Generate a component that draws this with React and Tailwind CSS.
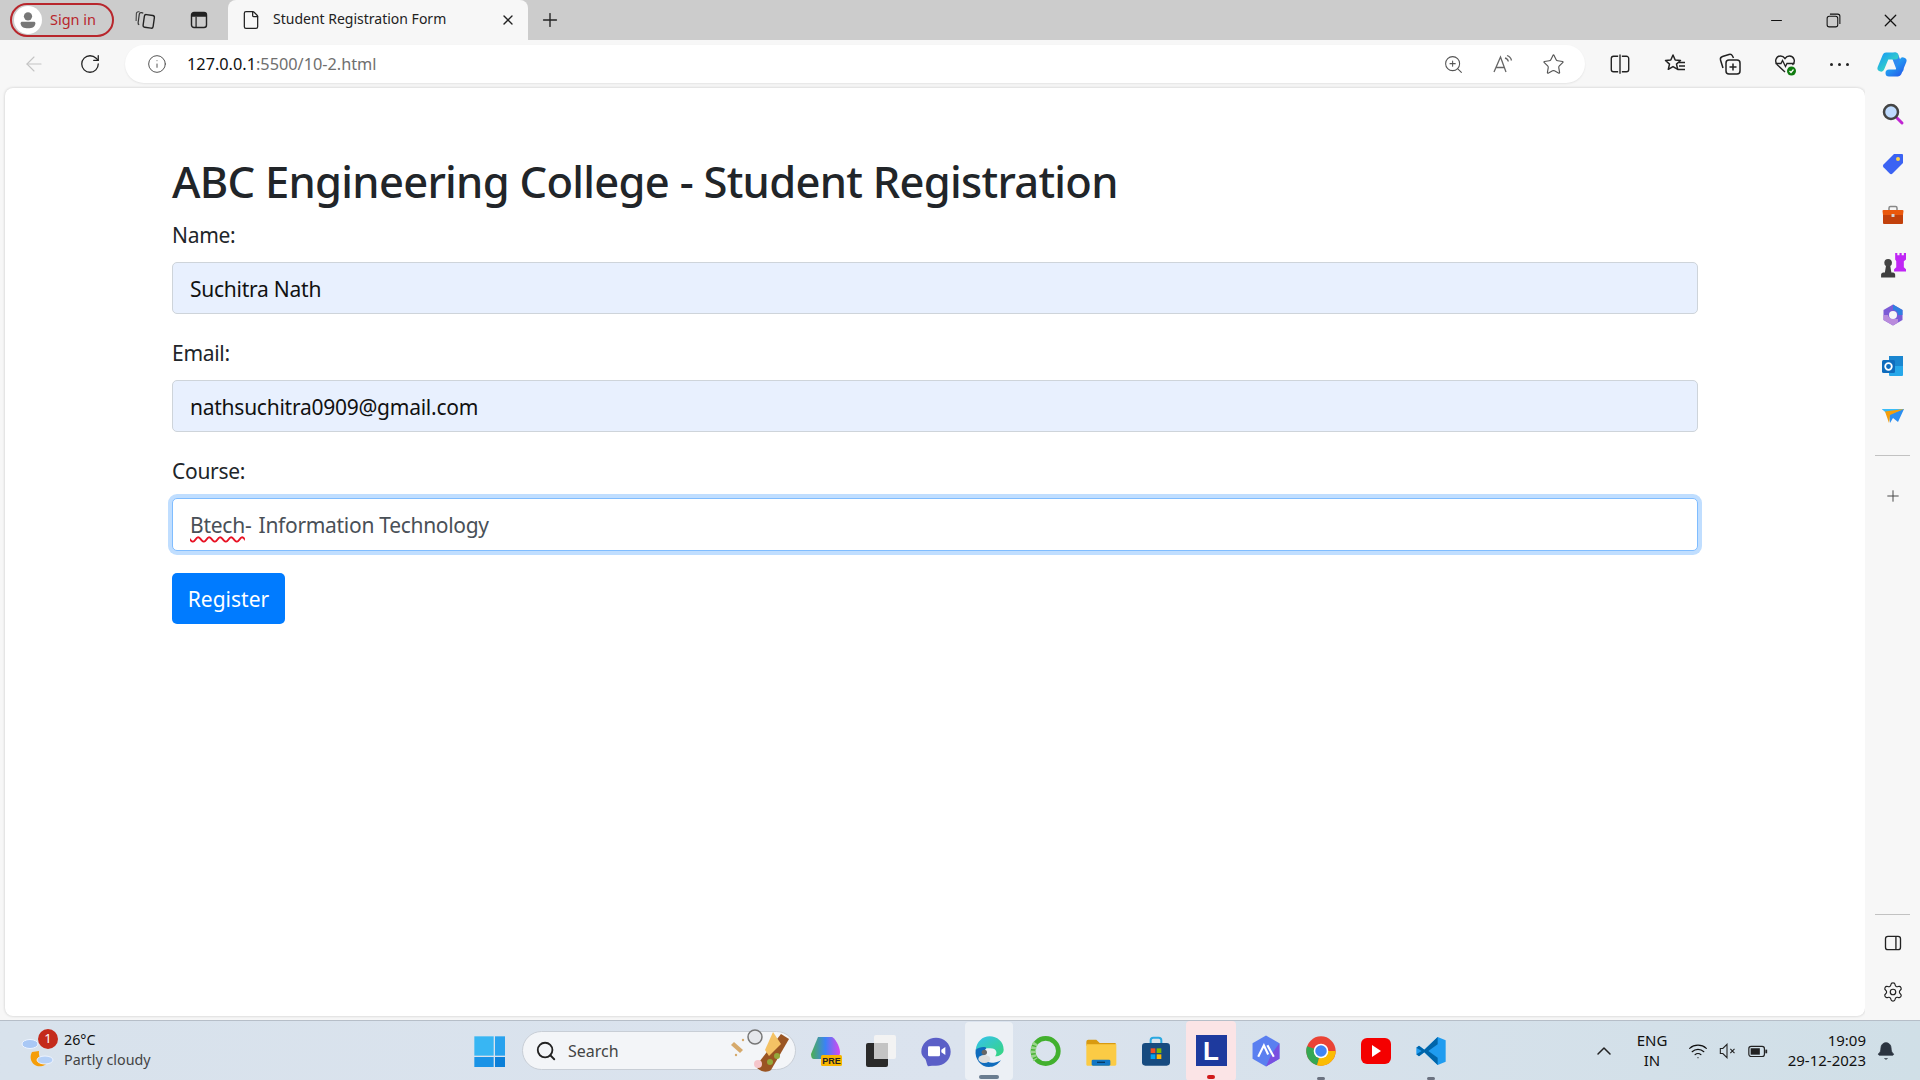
import React from "react";
import { File, X, Plus, ArrowLeft, RotateCw, Info, ZoomIn, Star, Minus, Search, ChevronUp, Wifi, Settings, Bell } from "lucide-react";

const sans = "font-['Noto_Sans','Open_Sans',sans-serif]";

const Svg = ({ s = 20, vb = 24, children, className = "" }) => (
  <svg width={s} height={s} viewBox={`0 0 ${vb} ${vb}`} fill="none" className={className}>{children}</svg>
);

const Slot = ({ w = 55, children, className = "" }) => (
  <div style={{ width: w }} className={`flex items-center justify-center shrink-0 h-full relative ${className}`}>{children}</div>
);

const Dot = ({ c }) => <div className="absolute bottom-0 left-1/2 -translate-x-1/2 h-[3px] w-[8px] rounded-full" style={{ background: c }} />;

function TabStrip() {
  return (
    <div className="h-10 bg-[#cccccc] flex items-end shrink-0 relative">
      <div className="w-[228px] h-10 flex items-center shrink-0">
        <div className="ml-[10px] w-[104px] h-[34px] rounded-full border-2 border-[#b8262c] flex items-center">
          <div className="ml-[2px] w-[28px] h-[28px] rounded-full bg-white flex items-center justify-center">
            <Svg s={22}><circle cx="12" cy="8" r="4.5" fill="#777" /><path d="M4 15.5c0-1 .8-1.5 2-1.5h12c1.2 0 2 .5 2 1.5C20 19.5 16.5 21 12 21s-8-1.5-8-5.5z" fill="#777" /></Svg>
          </div>
          <span className={`ml-[8px] text-[14.5px] leading-[20px] pb-[2px] text-[#b8262c] ${sans}`}>Sign in</span>
        </div>
        <Slot w={22} className="ml-[21px]">
          <Svg s={22}>
            <rect x="9.5" y="6.5" width="11" height="14" rx="2" transform="rotate(8 15 13.5)" stroke="#222" strokeWidth="1.5" />
            <path d="M9 4.5 7 4a2 2 0 0 0-2.3 1.600L3.400 15a2 2 0 0 0 1.200 2.200" stroke="#333" strokeWidth="1.3" />
            <path d="M5 3 3.500 3A2 2 0 0 0 1.500 5l-.3 8" stroke="#444" strokeWidth="1.2" />
          </Svg>
        </Slot>
        <Slot w={22} className="ml-[31px]">
          <Svg s={20}><rect x="3" y="3" width="18" height="18" rx="3" stroke="#222" strokeWidth="1.7" /><path d="M3 8V6a3 3 0 0 1 3-3h12a3 3 0 0 1 3 3v2z" fill="#222" /><path d="M8.5 8v13" stroke="#222" strokeWidth="1.5" /></Svg>
        </Slot>
      </div>
      <div className="w-[300px] h-10 bg-[#f7f7f7] rounded-t-[8px] flex items-center shrink-0 ml-0">
        <File size={20} strokeWidth={1.5} className="ml-[13px] text-[#222]" />
        <span className={`ml-[12px] text-[14px] leading-[20px] pb-[2px] text-[#222] flex-1 ${sans}`}>Student Registration Form</span>
        <X size={16} strokeWidth={2} className="mr-[12px] text-[#222]" />
      </div>
      <div className="w-11 h-10 flex items-center justify-center">
        <Plus size={22} strokeWidth={1.5} className="text-[#222]" />
      </div>
      <div className="flex-1" />
      <div className="h-10 flex items-center mr-[1px]">
        <Slot w={57}><Minus size={17} strokeWidth={1.5} className="text-[#111]" /></Slot>
        <Slot w={57}>
          <Svg s={17}><rect x="3" y="6" width="15" height="15" rx="3" stroke="#111" strokeWidth="1.5" /><path d="M7 3h11a3 3 0 0 1 3 3v11" stroke="#111" strokeWidth="1.5" /></Svg>
        </Slot>
        <Slot w={57}><X size={21} strokeWidth={1.4} className="text-[#111]" /></Slot>
      </div>
    </div>
  );
}

function Toolbar() {
  return (
    <div className="h-12 bg-[#f7f7f7] flex items-center shrink-0">
      <Slot w={56} className="ml-[6px]"><ArrowLeft size={24} strokeWidth={1.1} className="text-[#c4c4c4]" /></Slot>
      <Slot w={56}><RotateCw size={22} strokeWidth={1.4} className="text-[#222]" /></Slot>
      <div className="ml-[7px] w-[1460px] h-[38px] rounded-full bg-white shadow-[0_1px_2px_rgba(0,0,0,0.08)] flex items-center shrink-0">
        <Info size={20} strokeWidth={1.2} className="ml-[22px] text-[#555]" />
        <span className={`ml-[20px] text-[16.3px] flex-1 ${sans}`}><span className="text-[#111]">127.0.0.1</span><span className="text-[#6f6f6f]">:5500/10-2.html</span></span>
        <div className="flex items-center h-full mr-[7px]">
          <Slot w={50}><ZoomIn size={21} strokeWidth={1.2} className="text-[#555]" /></Slot>
          <Slot w={50}>
            <Svg s={24}><path d="M3 20 9.500 5 15 20M5 15.500h8.500" stroke="#666" strokeWidth="1.3" /><path d="M14 6c2 .5 3 1.800 3.300 3.500M16 3.500c2.500.8 4 2.500 4.500 5" stroke="#666" strokeWidth="1.3" /></Svg>
          </Slot>
          <Slot w={50}><Star size={23} strokeWidth={1.2} className="text-[#555]" /></Slot>
        </div>
      </div>
      <div className="flex items-center h-full">
        <Slot w={55} className="ml-[7px]">
          <Svg s={22}><path d="M10 3.500H5a2.500 2.500 0 0 0-2.500 2.500v12A2.500 2.500 0 0 0 5 20.500h5M14 3.500h5A2.500 2.500 0 0 1 21.500 6v12a2.500 2.500 0 0 1-2.500 2.500h-5M12 1.500v21" stroke="#222" strokeWidth="1.5" /></Svg>
        </Slot>
        <Slot w={55}>
          <Svg s={24}><path d="M10 3l2.200 5 5.300.5-4 3.600 1.200 5.200L10 14.600 5.300 17.300l1.200-5.200-4-3.600L7.800 8z" stroke="#222" strokeWidth="1.5" strokeLinejoin="round" /><path d="M16 10.500h6M16 14h6M14.500 17.500H22" stroke="#222" strokeWidth="1.5" /></Svg>
        </Slot>
        <Slot w={55}>
          <Svg s={24}><rect x="8" y="8" width="14" height="14" rx="3" stroke="#222" strokeWidth="1.5" /><path d="M15 11.500v7M11.500 15h7" stroke="#222" strokeWidth="1.5" /><path d="M5 16 2.500 8a3 3 0 0 1 2-3.500L11 2.500a3 3 0 0 1 3.500 1.500L15.500 6" stroke="#222" strokeWidth="1.5" /></Svg>
        </Slot>
        <Slot w={55}>
          <Svg s={24}><path d="M12 20 4.500 13C1 9.500 3 4 7.500 4c2 0 3.500 1 4.500 2.500C13 5 14.500 4 16.500 4 21 4 23 9.500 19.500 13" stroke="#222" strokeWidth="1.4" /><path d="M2.500 11.500H8l1.500-3 3 6 1.500-3h7.500" stroke="#222" strokeWidth="1.3" /><circle cx="18.500" cy="19" r="4.500" fill="#107c10" /><path d="m16.500 19 1.500 1.500 2.500-3" stroke="#fff" strokeWidth="1.2" /></Svg>
        </Slot>
        <Slot w={55}>
          <div className="flex gap-[5px]"><i className="w-[3px] h-[3px] rounded-full bg-[#222]" /><i className="w-[3px] h-[3px] rounded-full bg-[#222]" /><i className="w-[3px] h-[3px] rounded-full bg-[#222]" /></div>
        </Slot>
        <Slot w={50}><Copilot /></Slot>
      </div>
    </div>
  );
}

const Copilot = () => (
  <Svg s={32} vb={32}>
    <defs>
      <linearGradient id="cpa" x1="0" y1="0" x2="1" y2="1"><stop offset="0" stopColor="#1ea5ef" /><stop offset="1" stopColor="#3be0b8" /></linearGradient>
      <linearGradient id="cpb" x1="0" y1="0" x2="1" y2="1"><stop offset="0" stopColor="#22b8f5" /><stop offset="1" stopColor="#2563eb" /></linearGradient>
    </defs>
    <path d="M19 8 24 21" stroke="#2f8af0" strokeWidth="7" strokeLinecap="round" />
    <path d="M5 20 10 8H19" stroke="url(#cpa)" strokeWidth="7" strokeLinecap="round" strokeLinejoin="round" />
    <path d="M27 13 22 25H13" stroke="url(#cpb)" strokeWidth="7" strokeLinecap="round" strokeLinejoin="round" />
  </Svg>
);

function SideRail() {
  return (
    <div className="w-[55px] shrink-0 bg-[#f7f7f7] flex flex-col items-center">
      <div className="h-px shrink-0" />
      <div className="flex flex-col items-center">
        <Rail>
          <Svg s={24}><path d="m15 15 6 6" stroke="#c026d3" strokeWidth="3" strokeLinecap="round" /><circle cx="10" cy="10" r="7" fill="#bfdbfe" stroke="#444" strokeWidth="2.5" /></Svg>
        </Rail>
        <Rail>
          <Svg s={24}><path d="M13 2h8a1 1 0 0 1 1 1v8L11.500 21.500a2 2 0 0 1-2.800 0L2.500 15.300a2 2 0 0 1 0-2.800z" fill="#3b63f3" /><circle cx="17" cy="7" r="2" fill="#fcd34d" /></Svg>
        </Rail>
        <Rail>
          <Svg s={24}><path d="M8 7V5a1.500 1.500 0 0 1 1.500-1.500h5A1.500 1.500 0 0 1 16 5v2" stroke="#888" strokeWidth="1.5" /><path d="M1.500 8a1 1 0 0 1 1-1h19a1 1 0 0 1 1 1l-.5 4h-20z" fill="#ea580c" /><path d="M2 12h20v8a1 1 0 0 1-1 1H3a1 1 0 0 1-1-1z" fill="#c2410c" /><rect x="10.5" y="11" width="3" height="3" rx=".5" fill="#d4d4d4" /></Svg>
        </Rail>
        <Rail>
          <Svg s={26}><path d="M14 1h2v2h2V1h2v2h2V1h2v6l-2 1.500V14l2 2v2H13v-2l2-2V8.500L14 7z" fill="#c026f5" /><circle cx="7.5" cy="10" r="3.5" fill="#444" /><path d="M5.500 13h4l1 6h-6zM1 21c0-1 1-2 2-2h9c1 0 2 1 2 2v2.500H1z" fill="#3f3f3f" /></Svg>
        </Rail>
        <Rail>
          <Svg s={24}><path d="M12 1.500 21.500 7v10L12 22.500 2.500 17V7z" fill="#7c5bd6" /><path d="M12 1.500 21.500 7v5H17a5 5 0 0 0-5-5z" fill="#2f7fe0" /><path d="M2.500 12v5l9.500 5.500 5-3v-3.500H12a5 5 0 0 1-5-4z" fill="#b98bdc" /><circle cx="12" cy="12" r="4" fill="#f7f7f7" /></Svg>
        </Rail>
        <Rail>
          <Svg s={24}><path d="M8 2h14v10H8z" fill="#1a86d0" /><path d="M8 12h14v9a1 1 0 0 1-1 1H9a1 1 0 0 1-1-1z" fill="#27a8ea" /><rect x="1" y="6" width="13" height="13" rx="1.5" fill="#0f6cbd" /><circle cx="7.5" cy="12.500" r="3.300" stroke="#fff" strokeWidth="1.8" /></Svg>
        </Rail>
        <Rail>
          <Svg s={24}><path d="M1 5h22l-6 13-5-4-3 5-1-8z" fill="#2b8ef0" /><path d="M1 5h22L8 11z" fill="#38bdf8" /><path d="M4 7.500 23 5 9 11l-1 8z" fill="#f59e0b" /></Svg>
        </Rail>
        <div className="w-[35px] h-px bg-[#c2c2c2] mt-[14px]" />
        <Plus size={18} strokeWidth={1.3} className="text-[#444] mt-[31px]" />
      </div>
      <div className="flex-1" />
      <div className="w-[35px] h-px bg-[#c2c2c2]" />
      <Svg s={20} className="mt-[18px]"><rect x="3" y="4" width="18" height="16" rx="3" stroke="#222" strokeWidth="1.6" /><path d="M15.500 4v16" stroke="#222" strokeWidth="1.6" /></Svg>
      <Settings size={22} strokeWidth={1.3} className="text-[#222] mt-[28px] mb-[17px]" />
    </div>
  );
}

const Rail = ({ children }) => <div className="h-[50.3px] flex items-center justify-center">{children}</div>;

function Page() {
  const label = "block text-[21px] tracking-[-0.3px] leading-[32px] text-[#212529]";
  const field = "mt-[11px] block w-full h-[52px] bg-[#e8f0fe] border border-[#ced4da] rounded-[5px] px-[17px] pt-[2px] text-[21px] tracking-[-0.25px] text-[#111] outline-none";
  return (
    <div className="flex-1 bg-[#f7f7f7] pl-[5px] min-w-0 flex">
      <div className={`flex-1 bg-white rounded-[8px] shadow-[0_0_3px_rgba(0,0,0,0.2)] pl-[167px] pr-[167px] pt-[67px] mb-[4px] ${sans}`}>
        <h1 className="text-[43.5px] leading-[52px] font-medium text-[#212529] tracking-[-0.72px]">ABC Engineering College - Student Registration</h1>
        <label className={`${label} mt-[12px]`}>Name:</label>
        <input readOnly value="Suchitra Nath" className={field} />
        <label className={`${label} mt-[23px]`}>Email:</label>
        <input readOnly value="nathsuchitra0909@gmail.com" className={field} />
        <label className={`${label} mt-[23px]`}>Course:</label>
        <div role="textbox" className="mt-[11px] w-full h-[53px] bg-white border border-[#80bdff] rounded-[5px] px-[17px] pt-[2px] flex items-center text-[21px] tracking-[-0.25px] text-[#495057] shadow-[0_0_0_4px_#c0deff]">
          <span><span className="underline decoration-wavy decoration-[#e81123] decoration-[1.5px] underline-offset-[3px]">Btech</span>-<span className="ml-[2px] tracking-[-0.3px]"> Information Technology</span></span>
        </div>
        <button className="mt-[22px] pt-[2px] block w-[113px] h-[51px] bg-[#007bff] rounded-[5px] text-white text-[21px]">Register</button>
      </div>
    </div>
  );
}

function Weather() {
  return (
    <div className={`flex items-center w-[489px] shrink-0 h-full ${sans}`}>
      <div className="relative w-[38px] h-[40px] ml-[21px] shrink-0">
        <Svg s={38} vb={38}>
          <path d="M18 20c-1 7 4 12 10 10-2 4-7 6-12 5-6-2-8-9-5-14z" fill="#f59e0b" />
          <ellipse cx="9" cy="13" rx="8" ry="4.5" fill="#a9c8f5" stroke="#eef4ff" strokeWidth="1" />
          <ellipse cx="24" cy="29" rx="8" ry="4" fill="#b4d0f7" stroke="#eef4ff" strokeWidth="1" />
        </Svg>
        <div className="absolute left-[17px] -top-[2px] w-5 h-5 rounded-full bg-[#c42b1c] text-white text-[13px] flex items-center justify-center">1</div>
      </div>
      <div className="ml-[5px] leading-[20px] text-[14.3px] pb-[2px]">
        <div className="text-[#111]">26°C</div>
        <div className="text-[#444]">Partly cloudy</div>
      </div>
    </div>
  );
}

function Taskbar() {
  return (
    <div className="h-[60px] shrink-0 border-t border-[#b6bec8] bg-gradient-to-r from-[#d8e2ec] via-[#dbe3ee] to-[#d0dfe7] flex items-center relative">
      <Weather />
      <div className="flex items-center h-full">
        <Slot w={0} className="!w-0 overflow-visible">
          <Svg s={32} className="shrink-0 absolute">
            <rect x="1" y="1" width="14.5" height="14.5" fill="#38b6f3" /><rect x="16.5" y="1" width="14.5" height="14.5" fill="#28a2ee" /><rect x="1" y="16.5" width="14.5" height="14.5" fill="#1a93e6" /><rect x="16.5" y="16.5" width="14.5" height="14.5" fill="#0b7fd8" />
          </Svg>
        </Slot>
        <div className={`ml-[33px] w-[274px] h-[39px] rounded-full bg-[#f3f5f8] border border-[#c8ced6] flex items-center shrink-0 ${sans}`}>
          <Search size={22} strokeWidth={2} className="ml-[12px] text-[#222]" />
          <span className="ml-[11px] text-[16px] text-[#444] flex-1">Search</span>
          <Svg s={62} vb={62} className="mr-[2px] -my-2">
            <circle cx="24" cy="17" r="7" fill="#e5e7eb" stroke="#777" strokeWidth="1.5" />
            <path d="M3 22l9 8-3 3-9-8z" fill="#d6a96b" />
            <circle cx="12" cy="20" r="1.2" fill="#d6a96b" /><circle cx="5" cy="35" r="1.2" fill="#d6a96b" />
            <path d="M25 46 50 14l8 5-18 31c-4 3-12 2-15-4z" fill="#9a5523" />
            <path d="M34 30 42 12l8 12-12 12z" fill="#f4c264" />
            <circle cx="39" cy="42" r="3" fill="#94a83a" /><circle cx="46" cy="36" r="3" fill="#94a83a" /><circle cx="27" cy="44" r="4" fill="#f5c6cb" />
          </Svg>
        </div>
        <Slot w={55} className="ml-[3px]">
          <Svg s={36} vb={36}>
            <defs><linearGradient id="cp2" x1="0" y1="0" x2="1" y2="0"><stop offset="0" stopColor="#4caf50" /><stop offset=".5" stopColor="#3b82f6" /><stop offset="1" stopColor="#d946ef" /></linearGradient></defs>
            <path d="M9 4h14c2 0 8 9 8 15s-4 7-8 7H5c-2 0-3-2-3-5z" fill="url(#cp2)" />
            <rect x="12" y="22" width="21" height="11" rx="1.5" fill="#f8b500" />
            <text x="22.5" y="31" textAnchor="middle" fontSize="9" fontWeight="700" fill="#222" fontFamily="Liberation Sans">PRE</text>
          </Svg>
        </Slot>
        <Slot w={53}>
          <div className="relative w-[30px] h-[32px]">
            <div className="absolute right-0 top-0 w-[22px] h-[24px] bg-[#f3f3f3] rounded-[2px]" />
            <div className="absolute left-0 bottom-0 w-[22px] h-[24px] bg-[#2a2a2a] rounded-[2px]" />
            <div className="absolute left-[8px] top-[8px] w-[14px] h-[16px] bg-[#c4c4c4]" />
          </div>
        </Slot>
        <Slot w={57}>
          <Svg s={32}><path d="M12 2c6 0 11 4.500 11 10.500S18 23 12 23c-2 0-4 0-6 .5C5 22 5 20 4 18 2 16 1 14.500 1 12.500 1 6.500 6 2 12 2z" fill="#5b5fc7" /><path d="M7 8.500h7a1 1 0 0 1 1 1V15a1 1 0 0 1-1 1H7a1 1 0 0 1-1-1V9.500a1 1 0 0 1 1-1zM16 11l3-2v6l-3-2z" fill="#fff" /></Svg>
        </Slot>
        <Slot w={50}>
          <div className="w-[48px] h-[58px] bg-[#ecf0f5] rounded-[4px] flex items-center justify-center relative">
            <Svg s={32}>
              <defs><linearGradient id="ed" x1="0" y1="0" x2="1" y2="1"><stop offset="0" stopColor="#35c1f1" /><stop offset="1" stopColor="#36d67c" /></linearGradient></defs>
              <path d="M2 11C3 5 7 1 12.500 1 18 1 23 5 23 11c0 3-3 5-6.500 5 2-2 1.500-6-3.500-6-5 0-8 0-11 1z" fill="url(#ed)" />
              <path d="M2 11c3-2.500 8-2.500 8-1-2 2-2 5 0 9 1 2 5 3 11 0-3 4-6 5-9 5C6 24 1 18 2 11z" fill="#0f6cbd" />
              <circle cx="8.5" cy="13" r="2" fill="#666" /><ellipse cx="8.5" cy="18" rx="4.5" ry="3" fill="#ddd" />
            </Svg>
            <div className="absolute bottom-[1px] left-1/2 -translate-x-1/2 w-[20px] h-[4px] rounded-full bg-[#6a7d90]" />
          </div>
        </Slot>
        <Slot w={62}>
          <Svg s={32}><circle cx="12.5" cy="12" r="9.5" stroke="#42b02e" strokeWidth="3.5" /><path d="M5 6c-2 3-2.500 9 0 12.500" stroke="#9bd48e" strokeWidth="4" strokeDasharray="2 1" /></Svg>
        </Slot>
        <Slot w={49}>
          <Svg s={32}><path d="M1 5a1.500 1.500 0 0 1 1.500-1.500h6L11 6h12v2H1z" fill="#d99a10" /><path d="M1 7h22.500v15a1 1 0 0 1-1 1h-21a1 1 0 0 1-.5-1z" fill="#fbcb45" /><rect x="5" y="18.500" width="14" height="4.500" rx="1" fill="#1276c4" /><path d="M9 20.500h6" stroke="#063a63" strokeWidth="1" /></Svg>
        </Slot>
        <Slot w={61}>
          <Svg s={32}><path d="M8 6V4a2 2 0 0 1 2-2h4a2 2 0 0 1 2 2v2" stroke="#2aa8e0" strokeWidth="1.5" /><rect x="1.5" y="6" width="21" height="17" rx="2.5" fill="#174b80" /><rect x="8" y="10" width="3.5" height="3.5" fill="#f25022" /><rect x="12.5" y="10" width="3.5" height="3.5" fill="#7fba00" /><rect x="8" y="14.500" width="3.5" height="3.5" fill="#00a4ef" /><rect x="12.5" y="14.500" width="3.5" height="3.5" fill="#ffb900" /></Svg>
        </Slot>
        <Slot w={50}>
          <div className="w-[50px] h-[60px] bg-[#fbe4e6] rounded-[4px] flex items-center justify-center relative">
            <div className="w-[31px] h-[31px] bg-[#1e3a9e] flex items-center justify-center text-white text-[26px] font-bold font-['Liberation_Sans',sans-serif] leading-none">L</div>
            <div className="absolute bottom-[2px] left-1/2 -translate-x-1/2 w-[8px] h-[4px] rounded-full bg-[#d11a1a]" />
          </div>
        </Slot>
        <Slot w={60}>
          <Svg s={34}><path d="M12 1 21.500 6.500v11L12 23 2.500 17.500v-11z" fill="#5a7ff0" /><path d="M21.500 6.500v11L12 23 16 14z" fill="#7a4fe0" /><path d="m6.500 16 4-8 3 6.500M13 8l4.500 8" stroke="#fff" strokeWidth="1.5" /></Svg>
        </Slot>
        <Slot w={50}>
          <Svg s={32}><circle cx="12" cy="12" r="11" fill="#ea4335" /><path d="M12 12 1.500 8.500A11 11 0 0 0 9 22.600z" fill="#34a853" /><path d="M12 12 9 22.600A11 11 0 0 0 23 12z" fill="#fbbc04" /><circle cx="12" cy="12" r="5.5" fill="#fff" /><circle cx="12" cy="12" r="4.3" fill="#4285f4" /></Svg>
          <Dot c="#6b7280" />
        </Slot>
        <Slot w={60}>
          <div className="w-[30px] h-[26px] rounded-[6px] bg-[#f40000] flex items-center justify-center">
            <div className="w-0 h-0 border-y-[6px] border-y-transparent border-l-[9px] border-l-white" />
          </div>
        </Slot>
        <Slot w={50}>
          <Svg s={32}><path d="M17 1.500 7 11 3 8 1 9.500v5L3 16l4-3 10 9.500 6-2.500V4z" fill="#1f9cf0" /><path d="M17 1.500 7 11 3 8 1 9.500 5 12l-4 2.500L3 16l4-3 10 9.500V17l-7-5 7-5z" fill="#0065a9" /></Svg>
          <Dot c="#6b7280" />
        </Slot>
      </div>
      <div className="flex-1" />
      <div className={`flex items-center h-full text-[#111] ${sans}`}>
        <ChevronUp size={24} strokeWidth={1.5} className="text-[#222] mr-[20px]" />
        <div className="text-[15px] leading-[20px] text-center w-[32px] mr-[20px] pb-[2px]"><div>ENG</div><div>IN</div></div>
        <Wifi size={20} strokeWidth={1.4} className="mr-[9px]" />
        <Svg s={20} className="mr-[10px]"><path d="M4 9v6h3l5 5V4L7 9z" stroke="#222" strokeWidth="1.3" /><path d="m16 9.500 5 5M21 9.500l-5 5" stroke="#222" strokeWidth="1.3" /></Svg>
        <Svg s={22} className="mr-[9px]"><rect x="2" y="7" width="17" height="11" rx="2.5" stroke="#222" strokeWidth="1.3" /><rect x="4" y="9" width="10" height="7" fill="#222" /><path d="M21 10.500v4" stroke="#222" strokeWidth="2" /></Svg>
        <div className="text-[15px] leading-[20px] text-right w-[88px] pb-[2px]"><div>19:09</div><div>29-12-2023</div></div>
        <Bell size={20} fill="#2b3440" strokeWidth={1} className="ml-[10px] mr-[24px] text-[#2b3440]" />
      </div>
    </div>
  );
}

export default function App() {
  return (
    <div className="w-[1920px] h-[1080px] flex flex-col overflow-hidden bg-[#f7f7f7]">
      <TabStrip />
      <Toolbar />
      <div className="flex-1 flex min-h-0">
        <Page />
        <SideRail />
      </div>
      <Taskbar />
    </div>
  );
}
